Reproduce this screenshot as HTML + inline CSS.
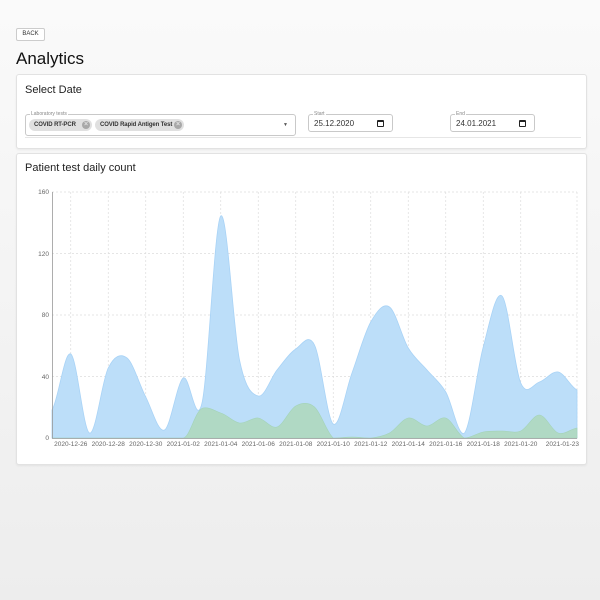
<!DOCTYPE html>
<html><head><meta charset="utf-8"><style>
*{box-sizing:border-box;margin:0;padding:0}
body{width:600px;height:600px;overflow:hidden;background:linear-gradient(#fafafa,#ededed);font-family:"Liberation Sans",sans-serif;color:#222;position:relative}
.abs{position:absolute}
.card{position:absolute;background:#fff;border:1px solid #e2e2e2;border-radius:3px;box-shadow:0 1px 2px rgba(0,0,0,.06)}
.btn{left:16px;top:28px;width:29px;height:13px;border:1px solid #ccc;border-radius:2px;font-size:6px;line-height:11px;text-align:center;background:#fff;color:#333}
.fs{position:absolute;border:1px solid #c9c9c9;border-radius:3px}
.lbl{position:absolute;top:-4px;font-size:5px;color:#888;background:#fff;padding:0 1px}
.chip{position:absolute;top:4px;height:12px;border-radius:6px;background:#e0e0e0;font-size:6px;font-weight:bold;line-height:12px;padding-left:5px;color:#333;letter-spacing:-0.1px}
.chip i{position:absolute;right:2px;top:2px;width:8px;height:8px;border-radius:50%;background:#a8a8a8;color:#e0e0e0;font-style:normal;font-size:7px;line-height:8px;text-align:center}
.date{font-size:8px;color:#333}
.cal{position:absolute;top:6px;width:7px;height:7px;border:1.2px solid #222;border-top-width:2px;border-radius:1px}
</style></head><body>
<div class="abs btn">BACK</div>
<div class="abs" style="left:16px;top:49px;font-size:17px;color:#111">Analytics</div>
<div class="card" style="left:16px;top:74px;width:571px;height:75px">
 <div class="abs" style="left:8px;top:9px;font-size:11px">Select Date</div>
 <div class="fs" style="left:8px;top:39px;width:271px;height:22px">
  <span class="lbl" style="left:4px">Laboratory tests</span>
  <span class="chip" style="left:3px;width:63px">COVID RT-PCR<i>×</i></span>
  <span class="chip" style="left:69px;width:89px">COVID Rapid Antigen Test<i>×</i></span>
  <span class="abs" style="right:7px;top:7px;font-size:5px;color:#555">▼</span>
 </div>
 <div class="fs" style="left:291px;top:39px;width:85px;height:18px">
  <span class="lbl" style="left:4px">Start</span>
  <span class="abs date" style="left:5px;top:4px">25.12.2020</span><span class="cal" style="left:68px;top:5px"></span>
 </div>
 <div class="fs" style="left:433px;top:39px;width:85px;height:18px">
  <span class="lbl" style="left:4px">End</span>
  <span class="abs date" style="left:5px;top:4px">24.01.2021</span><span class="cal" style="left:68px;top:5px"></span>
 </div>
 <div class="abs" style="left:8px;top:62px;width:556px;height:1px;background:#e6e6e6"></div>
</div>
<div class="card" style="left:16px;top:153px;width:571px;height:312px">
 <div class="abs" style="left:8px;top:8px;font-size:11px">Patient test daily count</div>
</div>
<svg class="abs" style="left:0;top:0" width="600" height="600" id="ch">
 <g stroke="#ddd" stroke-width="0.7" stroke-dasharray="2,2" id="grid"></g>
 <path id="blue" fill="#bcdef9" stroke="#a9d3f6" stroke-width="0.8"/>
 <path id="green" fill="#b0d9c4" stroke="#a3d3b8" stroke-width="0.6"/>
 <line x1="52.5" y1="192" x2="52.5" y2="438" stroke="#999" stroke-width="0.8"/>
 <line x1="52" y1="438.5" x2="577" y2="438.5" stroke="#999" stroke-width="0.8"/>
 <g font-size="6.5" fill="#666" font-family="Liberation Sans" id="lbls">
  <text x="49" y="194" text-anchor="end">160</text>
  <text x="49" y="256" text-anchor="end">120</text>
  <text x="49" y="317" text-anchor="end">80</text>
  <text x="49" y="379" text-anchor="end">40</text>
  <text x="49" y="440" text-anchor="end">0</text>
 </g>
</svg>
<script>
var b=[410,354,433,368,358,397,430,378,403,216,360,396,370,349,345,424,373,322,307,348,370,392,433,347,296,383,382,372,390];
var g=[438,438,438,438,438,438,438,438,438,413,423,418,427,406,407,438,437,438,433,418,426,418,438,432,431,431,415,433,428];
function X(i){return 52+i*18.75}
function path(v){var p="M52,438L"+X(0)+","+v[0];for(var i=0;i<v.length-1;i++){var p0=v[Math.max(i-1,0)],p1=v[i],p2=v[i+1],p3=v[Math.min(i+2,v.length-1)];var x1=X(i),x2=X(i+1),d=18.75/3;
var c1=p1+(p2-p0)/6,c2=p2-(p3-p1)/6;c1=Math.min(c1,438);c2=Math.min(c2,438);p+="C"+(x1+d)+","+c1+" "+(x2-d)+","+c2+" "+x2+","+p2;}return p+"L577,438Z";}
document.getElementById('blue').setAttribute('d',path(b));
var gp="M52,438L183,438C190,438 195,410 203,408C210,407 215,411 "+X(9)+",413";
for(var i=9;i<28;i++){var p0=g[Math.max(i-1,9)],p1=g[i],p2=g[i+1],p3=g[Math.min(i+2,28)];var c1=Math.min(p1+(p2-p0)/6,438),c2=Math.min(p2-(p3-p1)/6,438);gp+="C"+(X(i)+6.25)+","+c1+" "+(X(i+1)-6.25)+","+c2+" "+X(i+1)+","+p2;}
gp+="L577,438Z";
document.getElementById('green').setAttribute('d',gp);
var gr=document.getElementById('grid'),h="";
[192,253.5,315,376.5].forEach(function(y){h+='<line x1="52" y1="'+y+'" x2="577" y2="'+y+'"/>'});
var L=document.getElementById('lbls'),t="";
var names=["2020-12-26","2020-12-28","2020-12-30","2021-01-02","2021-01-04","2021-01-06","2021-01-08","2021-01-10","2021-01-12","2021-01-14","2021-01-16","2021-01-18","2021-01-20"];
for(var k=0;k<13;k++){var x=X(1+2*k);h+='<line x1="'+x+'" y1="192" x2="'+x+'" y2="438"/>';t+='<text x="'+x+'" y="446" text-anchor="middle">'+names[k]+'</text>';}
h+='<line x1="577" y1="192" x2="577" y2="438"/>';
t+='<text x="579" y="446" text-anchor="end">2021-01-23</text>';
gr.innerHTML=h;L.innerHTML+=t;
</script>
</body></html>
